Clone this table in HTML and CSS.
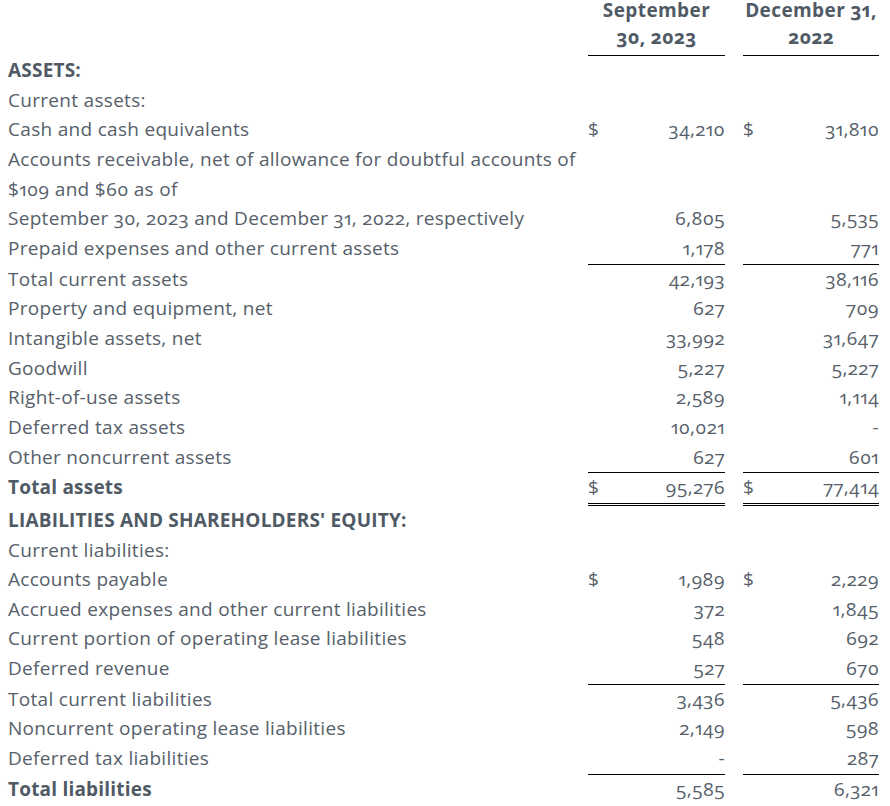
FILE: index.html
```html
<!DOCTYPE html>
<html lang="en">
<head>
<meta charset="utf-8">
<title>Condensed Consolidated Balance Sheets</title>
<link rel="stylesheet" href="styles.css">
</head>
<body>
<div class="sheet">
<table class="bs">
  <colgroup>
    <col class="c-label"><col class="c-sym"><col class="c-num1"><col class="c-gap"><col class="c-sym"><col class="c-num2">
  </colgroup>
  <thead>
    <tr>
      <th class="hl"></th>
      <th class="hd" colspan="2"><span class="h1">September</span><span class="h2">30, 2023</span></th>
      <th class="g"></th>
      <th class="hd" colspan="2"><span class="h1">December 31,</span><span class="h2">2022</span></th>
    </tr>
  </thead>
  <tbody>
    <tr><td class="l b">ASSETS:</td><td class="d"></td><td class="n"></td><td class="g"></td><td class="d"></td><td class="n"></td></tr>
    <tr><td class="l">Current assets:</td><td class="d"></td><td class="n"></td><td class="g"></td><td class="d"></td><td class="n"></td></tr>
    <tr><td class="l">Cash and cash equivalents</td><td class="d">$</td><td class="n">34,210</td><td class="g"></td><td class="d">$</td><td class="n">31,810</td></tr>
    <tr><td class="l">Accounts receivable, net of allowance for doubtful accounts of<br>$109 and $60 as of<br>September 30, 2023 and December 31, 2022, respectively</td><td class="d"></td><td class="n">6,805</td><td class="g"></td><td class="d"></td><td class="n">5,535</td></tr>
    <tr class="rule"><td class="l">Prepaid expenses and other current assets</td><td class="d"></td><td class="n">1,178</td><td class="g"></td><td class="d"></td><td class="n">771</td></tr>
    <tr><td class="l">Total current assets</td><td class="d"></td><td class="n">42,193</td><td class="g"></td><td class="d"></td><td class="n">38,116</td></tr>
    <tr><td class="l">Property and equipment, net</td><td class="d"></td><td class="n">627</td><td class="g"></td><td class="d"></td><td class="n">709</td></tr>
    <tr><td class="l">Intangible assets, net</td><td class="d"></td><td class="n">33,992</td><td class="g"></td><td class="d"></td><td class="n">31,647</td></tr>
    <tr><td class="l">Goodwill</td><td class="d"></td><td class="n">5,227</td><td class="g"></td><td class="d"></td><td class="n">5,227</td></tr>
    <tr><td class="l">Right-of-use assets</td><td class="d"></td><td class="n">2,589</td><td class="g"></td><td class="d"></td><td class="n">1,114</td></tr>
    <tr><td class="l">Deferred tax assets</td><td class="d"></td><td class="n">10,021</td><td class="g"></td><td class="d"></td><td class="n">-</td></tr>
    <tr class="rule"><td class="l">Other noncurrent assets</td><td class="d"></td><td class="n">627</td><td class="g"></td><td class="d"></td><td class="n">601</td></tr>
    <tr class="dbl"><td class="l b">Total assets</td><td class="d">$</td><td class="n">95,276</td><td class="g"></td><td class="d">$</td><td class="n">77,414</td></tr>
    <tr><td class="l b">LIABILITIES AND SHAREHOLDERS' EQUITY:</td><td class="d"></td><td class="n"></td><td class="g"></td><td class="d"></td><td class="n"></td></tr>
    <tr><td class="l">Current liabilities:</td><td class="d"></td><td class="n"></td><td class="g"></td><td class="d"></td><td class="n"></td></tr>
    <tr><td class="l">Accounts payable</td><td class="d">$</td><td class="n">1,989</td><td class="g"></td><td class="d">$</td><td class="n">2,229</td></tr>
    <tr><td class="l">Accrued expenses and other current liabilities</td><td class="d"></td><td class="n">372</td><td class="g"></td><td class="d"></td><td class="n">1,845</td></tr>
    <tr><td class="l">Current portion of operating lease liabilities</td><td class="d"></td><td class="n">548</td><td class="g"></td><td class="d"></td><td class="n">692</td></tr>
    <tr class="rule"><td class="l">Deferred revenue</td><td class="d"></td><td class="n">527</td><td class="g"></td><td class="d"></td><td class="n">670</td></tr>
    <tr><td class="l">Total current liabilities</td><td class="d"></td><td class="n">3,436</td><td class="g"></td><td class="d"></td><td class="n">5,436</td></tr>
    <tr><td class="l">Noncurrent operating lease liabilities</td><td class="d"></td><td class="n">2,149</td><td class="g"></td><td class="d"></td><td class="n">598</td></tr>
    <tr class="rule"><td class="l">Deferred tax liabilities</td><td class="d"></td><td class="n">-</td><td class="g"></td><td class="d"></td><td class="n">287</td></tr>
    <tr><td class="l b">Total liabilities</td><td class="d"></td><td class="n">5,585</td><td class="g"></td><td class="d"></td><td class="n">6,321</td></tr>
  </tbody>
</table>
</div>
</body>
</html>
```
FILE: styles.css
```css
html, body {
  margin: 0;
  padding: 0;
  background: #ffffff;
}

.sheet {
  padding: 0 11px 0 8px;
  color: #56606a;
  font-family: "Open Sans", "Noto Sans", sans-serif;
  font-size: 19px;
  letter-spacing: 0.3px;
  font-variant-numeric: oldstyle-nums proportional-nums;
}

.bs {
  width: 871px;
  table-layout: fixed;
  border-collapse: separate;
  border-spacing: 0;
}

.c-label { width: 580px; }
.c-sym { width: 22px; }
.c-num1 { width: 115px; }
.c-gap { width: 18px; }
.c-num2 { width: 114px; }

.bs th,
.bs td {
  padding: 0;
  vertical-align: bottom;
  white-space: nowrap;
  line-height: 29.65px;
}

.bs th.hd {
  font-weight: 700;
  text-align: center;
  letter-spacing: 0.4px;
  padding-bottom: 1px;
  border-bottom: 1px solid #000;
  color: #4f5a65;
}

.h1 {
  display: block;
  line-height: 20px;
}

.h2 {
  display: block;
  line-height: 34px;
}

.l { text-align: left; }
.b { font-weight: 700; color: #4f5a65; letter-spacing: 0.2px; }
.d { text-align: left; }
.n { text-align: right; }

.rule td { border-bottom: 1px solid transparent; }
.rule td.d,
.rule td.n { border-bottom-color: #000; }

.dbl td { border-bottom: 3px double transparent; }
.dbl td.d,
.dbl td.n { border-bottom-color: #000; }
```
